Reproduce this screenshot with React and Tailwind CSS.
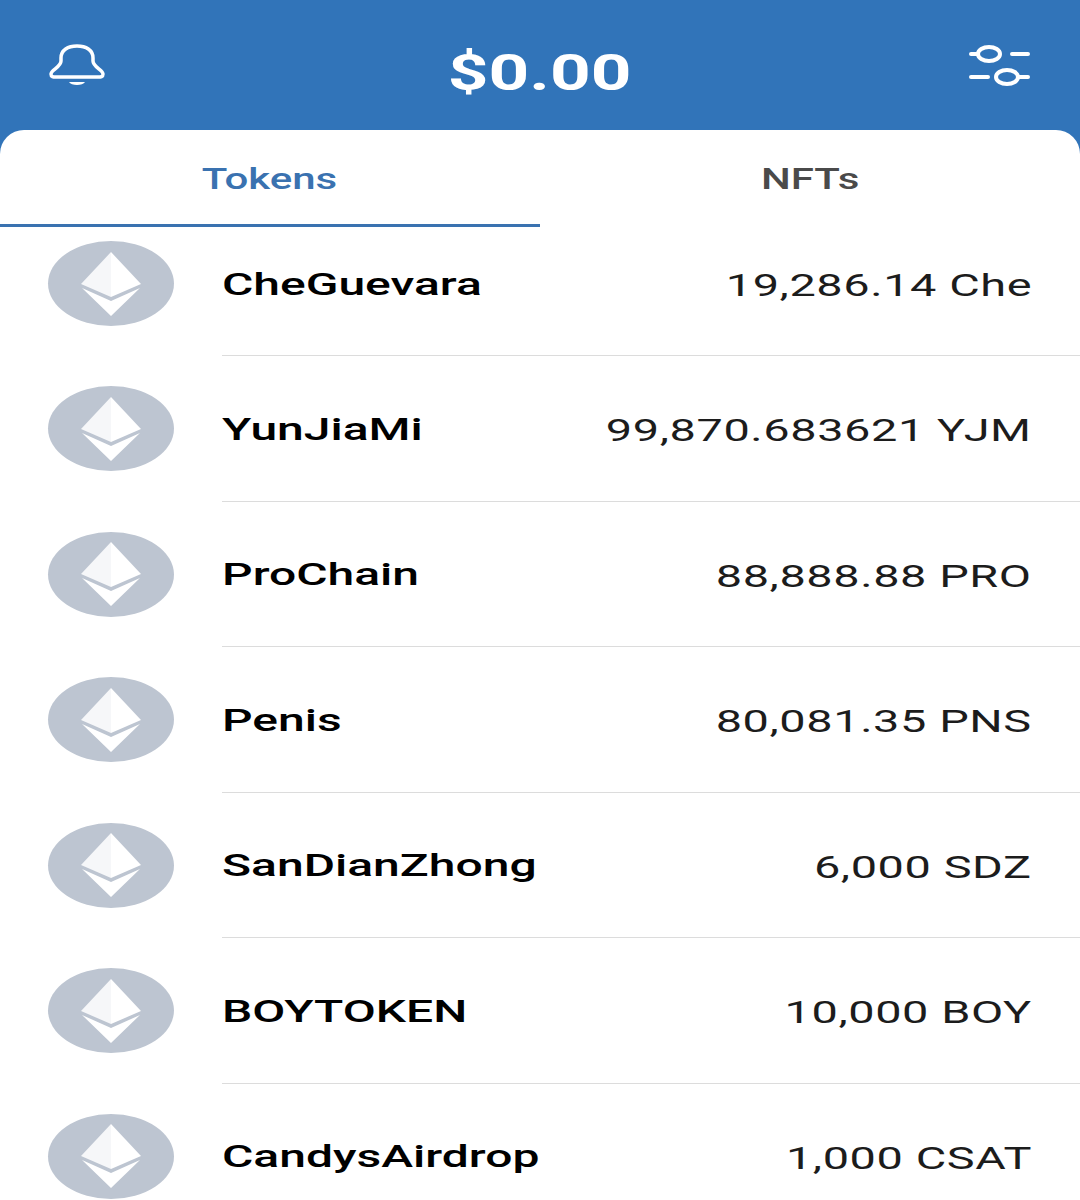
const tokens = [
  ["CheGuevara", "19,286.14 Che"],
  ["YunJiaMi", "99,870.683621 YJM"],
  ["ProChain", "88,888.88 PRO"],
  ["Penis", "80,081.35 PNS"],
  ["SanDianZhong", "6,000 SDZ"],
  ["BOYTOKEN", "10,000 BOY"],
  ["CandysAirdrop", "1,000 CSAT"],
];

function Eth() {
  return (
    <div className="w-[126px] h-[85px] shrink-0 rounded-[50%] bg-[#bdc5d1] flex items-center justify-center">
      <svg width="60" height="64" viewBox="0 0 60 64">
        <polygon points="30,0 30,45 0,32" fill="#f6f7f9" />
        <polygon points="30,0 60,32 30,45" fill="#ffffff" />
        <polygon points="1,36 30,49 59,36 30,64" fill="#ffffff" />
      </svg>
    </div>
  );
}

function Row({ name, amount, first, last }) {
  return (
    <div className={"flex items-stretch " + (first ? "h-[129px]" : "h-[145.5px]")}>
      <div className={"pl-12 flex " + (first ? "pt-[14px]" : "pt-[30px]")}>
        <Eth />
      </div>
      <div
        className={
          "ml-12 flex-1 flex justify-between pr-[48px] " +
          (first ? "pt-[14px] " : "pt-[30px] ") +
          (last ? "" : "border-b border-[#dcdcdc]")
        }
      >
        <div className="h-[85px] flex items-center">
          <span className="inline-block origin-left scale-x-[1.5] font-medium text-[32px] leading-[38px] text-black whitespace-nowrap">
            {name}
          </span>
        </div>
        <div className="h-[85px] flex items-center">
          <span className="inline-block origin-right scale-x-[1.465] text-[32px] leading-[38px] mt-[3px] tracking-[0.4px] text-[#1c1c1c] whitespace-nowrap">
            {amount}
          </span>
        </div>
      </div>
    </div>
  );
}

export default function App() {
  return (
    <div className="w-[1080px] h-[1200px] overflow-hidden bg-[#3174b9] font-['Roboto',sans-serif]">
      <header className="h-[130px] flex items-start justify-between pl-[48px] pr-[49px]">
        <svg width="58" height="44" viewBox="0 0 58 44" className="mt-[44px]" fill="none" stroke="#fff" strokeWidth="3.5">
          <path d="M13 14 C13 6 20 2 29 2 C38 2 45 6 45 14 V17 C45 23 55 26 55 30 C55 33 53 33 50 33 H8 C5 33 3 33 3 30 C3 26 13 23 13 17 Z" strokeLinejoin="round" />
          <path d="M21 38 H37 C35 42 23 42 21 38 Z" fill="#fff" stroke="none" />
        </svg>
        <div className="flex-1 flex justify-center pt-[41px] pl-[4px]">
          <span className="inline-block scale-x-[1.42] text-white font-bold text-[50px] leading-[64px]">$0.00</span>
        </div>
        <svg width="62" height="44" viewBox="0 0 62 44" className="mt-[44px]" fill="none" stroke="#fff" strokeWidth="4" strokeLinecap="round">
          <path d="M2 10 H8 M43 10 H59 M2 33 H19 M50 33 H59" />
          <ellipse cx="20" cy="10" rx="11" ry="7" />
          <ellipse cx="38" cy="33" rx="11" ry="7" />
        </svg>
      </header>
      <main className="h-[1070px] bg-white rounded-t-[24px] overflow-hidden">
        <div className="flex h-[97px]">
          <div className="w-[540px] flex items-center justify-center border-b-[3px] border-[#3a72b0] pr-[2px] pt-[2px]">
            <span className="inline-block scale-x-[1.4] font-medium text-[30px] text-[#3a72b0]">Tokens</span>
          </div>
          <div className="w-[540px] flex items-center justify-center pb-[1px]">
            <span className="inline-block scale-x-[1.4] font-medium text-[30px] text-[#4a4a4a]">NFTs</span>
          </div>
        </div>
        {tokens.map(([n, a], i) => (
          <Row key={n} name={n} amount={a} first={i === 0} last={i === tokens.length - 1} />
        ))}
      </main>
    </div>
  );
}
